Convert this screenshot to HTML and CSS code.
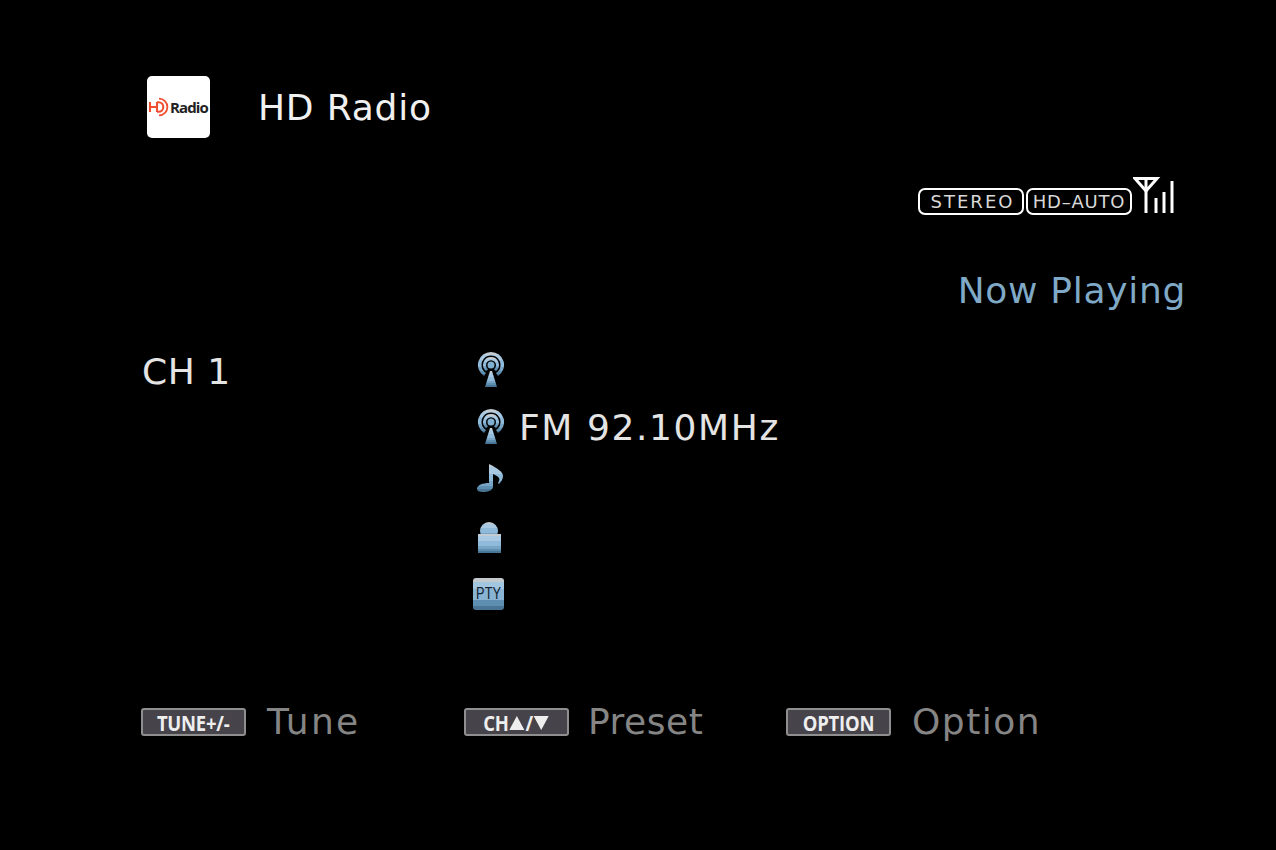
FILE: index.html
```html
<!DOCTYPE html>
<html lang="en">
<head>
    <meta charset="UTF-8">
    <title>HD Radio</title>
    <link rel="stylesheet" href="styles.css">
</head>
<body>

<svg class="defs" width="0" height="0">
    <defs>
        <!-- stepped bands, the icons in the reference are not smooth -->
        <linearGradient id="blue" x1="0" y1="0" x2="0" y2="1">
            <stop offset="0" stop-color="#c3ccd2"/>
            <stop offset="0.12" stop-color="#c3ccd2"/>
            <stop offset="0.12" stop-color="#a9c9e2"/>
            <stop offset="0.35" stop-color="#a9c9e2"/>
            <stop offset="0.35" stop-color="#8fbada"/>
            <stop offset="0.62" stop-color="#8fbada"/>
            <stop offset="0.62" stop-color="#78a5c6"/>
            <stop offset="0.78" stop-color="#78a5c6"/>
            <stop offset="0.78" stop-color="#5f8fb0"/>
            <stop offset="0.9" stop-color="#5f8fb0"/>
            <stop offset="0.9" stop-color="#4a7594"/>
            <stop offset="1" stop-color="#4a7594"/>
        </linearGradient>
        <g id="tower">
            <path fill-rule="evenodd" fill="url(#blue)" d="M18 1a13 13 0 0 1 7 24l-2-3a9.500 9.500 0 1 0-10 0l-2 3A13 13 0 0 1 18 1z"/>
            <path fill-rule="evenodd" fill="url(#blue)" d="M18 6a8 8 0 0 1 5 14.200l-2-2a5 5 0 1 0-6 0l-2 2A8 8 0 0 1 18 6z"/>
            <circle cx="18" cy="14" r="3.500" fill="#7fb0d2"/>
            <path fill="url(#blue)" d="M17 20h2l5 16H12z"/>
        </g>
    </defs>
</svg>

<div class="screen">
    <header class="title-row">
        <div class="logo">
            <svg class="logo-hd" width="21" height="20" viewBox="0 0 21 20">
                <path d="M2 5v10M2 10h7M9 5v10" fill="none" stroke="#f04e30" stroke-width="2.100"/>
                <path d="M9 5.200h1.500a4.800 4.800 0 0 1 0 9.600H9" fill="none" stroke="#f04e30" stroke-width="2.100"/>
                <path d="M11 1.600a8.400 8.400 0 0 1 0 16.800" fill="none" stroke="#f04e30" stroke-width="1.800"/>
            </svg>
            <span class="logo-text">Radio</span>
        </div>
        <h1 class="title">HD Radio</h1>
    </header>

    <div class="status-row">
        <span class="tag tag-stereo">STEREO</span>
        <span class="tag tag-auto">HD&ndash;AUTO</span>
        <svg class="signal" width="42" height="36" viewBox="0 0 42 36">
            <path d="M2 1.500h22L13 14z" fill="none" stroke="#fff" stroke-width="3"/>
            <path d="M13 3v33M23 36V21M31 36V15M39 36V4" fill="none" stroke="#fff" stroke-width="3"/>
        </svg>
    </div>

    <div class="now-playing">Now Playing</div>

    <section class="info">
        <div class="channel">CH 1</div>
        <div class="details">
            <div class="detail-row">
                <svg class="icon" width="32" height="38" viewBox="0 0 32 38"><use href="#tower"/></svg>
            </div>
            <div class="detail-row detail-freq">
                <svg class="icon" width="32" height="38" viewBox="0 0 32 38"><use href="#tower"/></svg>
                <span class="freq">FM 92.10MHz</span>
            </div>
            <div class="detail-row detail-note">
                <svg class="icon" width="32" height="30" viewBox="0 0 32 30">
                    <path fill="url(#blue)" d="M16 2l4 2c5 3 10 6 10 10 0 3-2 6-4 8l-1-1c1-2 2-4 1-5-1-2-4-3-6-4v13c0 3-5 5-10 5-4 0-6-1-6-3 0-4 6-6 12-6z"/>
                </svg>
            </div>
            <div class="detail-row detail-artist">
                <svg class="icon" width="32" height="34" viewBox="0 0 32 34">
                    <circle cx="16" cy="11" r="9" fill="url(#blue)"/>
                    <path fill="url(#blue)" d="M5 14h23v19H5z"/>
                </svg>
            </div>
            <div class="detail-row detail-pty">
                <div class="pty"><span class="pty-text">PTY</span></div>
            </div>
        </div>
    </section>

    <footer class="help">
        <div class="help-item help-tune">
            <span class="key"><span class="key-text">TUNE+/-</span></span>
            <span class="help-label label-tune">Tune</span>
        </div>
        <div class="help-item help-preset">
            <span class="key">
                <span class="key-text key-ch">CH
                    <svg class="tri" width="18" height="14" viewBox="0 0 18 14"><path d="M9 0l9 14H0z" fill="#eee"/></svg>/<svg class="tri" width="18" height="14" viewBox="0 0 18 14"><path d="M0 0h18L9 14z" fill="#eee"/></svg>
                </span>
            </span>
            <span class="help-label label-preset">Preset</span>
        </div>
        <div class="help-item">
            <span class="key"><span class="key-text">OPTION</span></span>
            <span class="help-label">Option</span>
        </div>
    </footer>
</div>

</body>
</html>
```

FILE: styles.css
```css
* {
    box-sizing: border-box;
}
html, body {
    margin: 0;
    height: 100%;
}
body {
    background-color: #000;
    color: #e4e4e4;
    font-family: "DejaVu Sans", sans-serif;
    overflow: hidden;
}
.defs {
    display: block;
}
.screen {
    display: flex;
    flex-direction: column;
    padding: 76px 90px 0 141px;
}
.title-row {
    display: flex;
    align-items: center;
    gap: 48px;
    height: 62px;
    padding-left: 6px;
}
.logo {
    width: 63px;
    height: 62px;
    background-color: #fff;
    border-radius: 5px;
    display: flex;
    align-items: center;
    padding-left: 1px;
    gap: 1px;
}
.logo-text {
    font-family: "Open Sans", sans-serif;
    font-size: 15px;
    font-weight: 700;
    letter-spacing: -0.9px;
    color: #222;
}
.title {
    margin: 0;
    font-size: 36px;
    font-weight: 400;
    letter-spacing: 0.8px;
    color: #f0f0f0;
}
.status-row {
    display: flex;
    justify-content: flex-end;
    align-items: flex-end;
    gap: 2px;
    margin-top: 38px;
    padding-right: 11px;
    height: 39px;
}
.tag {
    height: 27px;
    border: 2px solid #fff;
    border-radius: 7px;
    display: flex;
    align-items: center;
    justify-content: center;
    font-size: 18px;
    color: #d8d8d8;
}
.tag-stereo {
    width: 106px;
    letter-spacing: 2px;
    padding-left: 3px;
}
.tag-auto {
    width: 106px;
    letter-spacing: 0.8px;
}
.signal {
    margin-left: -1px;
    margin-bottom: 2px;
}
.now-playing {
    margin-top: 54px;
    text-align: right;
    font-size: 36px;
    letter-spacing: 0.7px;
    color: #7fa9c6;
    line-height: 44px;
}
.info {
    display: flex;
    margin-top: 37px;
}
.channel {
    width: 332px;
    font-size: 36px;
    letter-spacing: 0.5px;
    line-height: 44px;
    padding-left: 1px;
}
.details {
    display: flex;
    flex-direction: column;
    padding-top: 1px;
}
.detail-row {
    display: flex;
    align-items: center;
    height: 38px;
}
.detail-freq {
    margin-top: 19px;
}
.detail-note {
    margin-top: 16px;
    height: 30px;
}
.detail-artist {
    margin-top: 28px;
    height: 34px;
}
.detail-pty {
    margin-top: 23px;
    height: 34px;
}
.icon {
    display: block;
}
.freq {
    margin-left: 14px;
    font-size: 36px;
    letter-spacing: 1.6px;
}
.pty {
    width: 31px;
    height: 32px;
    border-radius: 3px;
    background: linear-gradient(#c3c9cd 0 12%, #a3c6e0 12% 35%, #88b3d3 35% 70%, #5f8fb0 70% 88%, #4a7594 88%);
    color: #10202e;
    display: flex;
    align-items: center;
    justify-content: center;
}
.pty-text {
    font-family: "Liberation Sans", sans-serif;
    font-size: 16px;
    transform: scaleX(0.8);
}
.help {
    display: flex;
    margin-top: 89px;
}
.help-item {
    display: flex;
    align-items: center;
    gap: 21px;
}
.help-tune {
    width: 323px;
}
.help-preset {
    width: 322px;
}
.key {
    width: 105px;
    height: 28px;
    background-color: #46434a;
    border: 2px solid #8f8f8f;
    border-radius: 3px;
    color: #eeeeee;
    display: flex;
    align-items: center;
    justify-content: center;
}
.key-text {
    flex: none;
    font-family: "Open Sans", sans-serif;
    font-size: 22px;
    line-height: 24px;
    font-weight: 700;
    letter-spacing: -0.3px;
    white-space: nowrap;
    transform: scaleX(0.84);
}
.key-ch {
    display: flex;
    align-items: center;
    gap: 1px;
}
.tri {
    display: block;
    margin-top: 1px;
}
.help-label {
    font-size: 36px;
    letter-spacing: 1.5px;
    color: #858585;
    line-height: 44px;
}
.label-tune {
    letter-spacing: 2.3px;
}
.label-preset {
    letter-spacing: 0.5px;
    margin-left: -2px;
}
```
